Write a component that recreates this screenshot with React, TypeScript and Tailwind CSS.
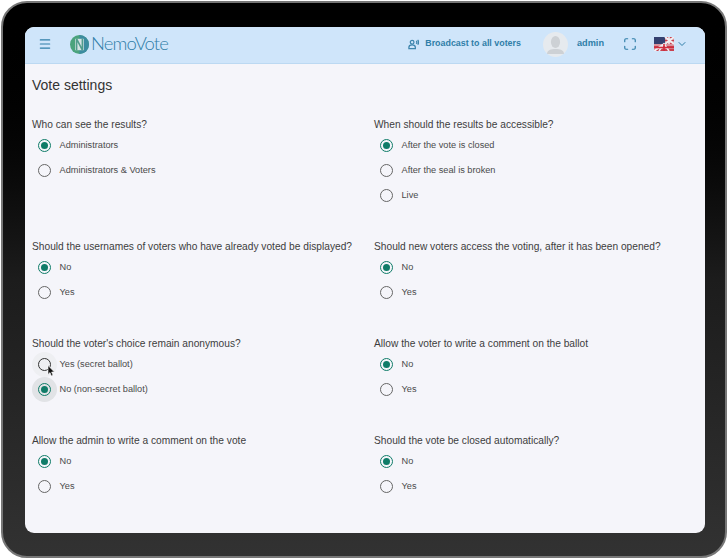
import { ChevronDown, Maximize, Menu } from "lucide-react";

// listed row by row, left cell then right cell
const QUESTIONS = [
  { q: "Who can see the results?", opts: ["Administrators", "Administrators & Voters"], on: 0 },
  { q: "When should the results be accessible?", opts: ["After the vote is closed", "After the seal is broken", "Live"], on: 0 },
  { q: "Should the usernames of voters who have already voted be displayed?", opts: ["No", "Yes"], on: 0 },
  { q: "Should new voters access the voting, after it has been opened?", opts: ["No", "Yes"], on: 0 },
  { q: "Should the voter's choice remain anonymous?", opts: ["Yes (secret ballot)", "No (non-secret ballot)"], on: 1, hover: true },
  { q: "Allow the voter to write a comment on the ballot", opts: ["No", "Yes"], on: 0 },
  { q: "Allow the admin to write a comment on the vote", opts: ["No", "Yes"], on: 0 },
  { q: "Should the vote be closed automatically?", opts: ["No", "Yes"], on: 0 },
];

function Radio({ label, checked, hover }: { label: string; checked: boolean; hover?: boolean }) {
  return (
    <div className="flex h-[25px] items-center">
      <span
        className={`flex h-[25px] w-[25px] items-center justify-center rounded-full ${
          hover ? (checked ? "bg-[#e1e3e6]" : "bg-[#eeeff2]") : ""
        }`}
      >
        <span
          className={`flex h-[13px] w-[13px] items-center justify-center rounded-full border-[1.5px] ${
            checked ? "border-[#0f7c68]" : hover ? "border-[#333333]" : "border-[#666666]"
          }`}
        >
          {checked && <span className="h-[7px] w-[7px] rounded-full bg-[#0f7c68]" />}
        </span>
      </span>
      <span className="ml-[2.5px] text-[9.2px] text-[#4a4a4a]">{label}</span>
    </div>
  );
}

function Question({ q, opts, on, hover }: { q: string; opts: string[]; on: number; hover?: boolean }) {
  return (
    <div className="mb-[31px]">
      <div className="h-4 text-[10.2px] leading-4 text-[#3d3d3d]">{q}</div>
      {opts.map((o, i) => (
        <div key={o} className="relative">
          <Radio label={o} checked={i === on} hover={hover} />
          {hover && i === 0 && (
            <svg className="absolute left-[15px] top-[13px] h-[12px] w-[9px]" viewBox="0 0 9 12">
              <path d="M1 0.5 L1 9.5 L3 7.6 L4.4 11 L6 10.3 L4.6 7 L7.4 7 Z" fill="#111111" stroke="#ffffff" strokeWidth="0.6" />
            </svg>
          )}
        </div>
      ))}
    </div>
  );
}

function Flag() {
  return (
    <svg className="h-[14px] w-5" viewBox="0 0 20 14">
      <rect width="20" height="14" fill="#c9404f" />
      <path d="M0 2h20M0 5h20M0 8h20M0 11h20" stroke="#e9e4ea" strokeWidth="1.2" />
      <rect width="11" height="7" fill="#34406f" />
      <path d="M11 0 20 7M20 0 11 7M0 14 10 7" stroke="#f1eef1" strokeWidth="2" />
      <path d="M15 0v7" stroke="#f1eef1" strokeWidth="1.6" />
      <path d="M5 14 10 7 15 14" stroke="#f1eef1" strokeWidth="1.6" fill="none" />
      <path d="M10 7v7M0 10.5h20" stroke="#d02b3c" strokeWidth="1.6" />
    </svg>
  );
}

export default function App() {
  return (
    <div className="h-[560px] w-[728px] bg-white p-px font-['Liberation_Sans',Arial,sans-serif]">
      <div className="h-[557px] w-[726px] rounded-[26px] border-2 border-[#777777] bg-gradient-to-b from-[#000000] via-[#1c1c1c] to-[#323232] pl-[22px] pt-6">
        <div className="flex h-[506px] w-[680px] flex-col overflow-hidden rounded-[9px] bg-[#f5f5fa]">
          <header className="flex h-[37px] shrink-0 items-center border-b border-[#bcd9f2] bg-[#cfe5fa] pb-[2px] text-[#2f7ea8]">
            <Menu className="ml-[13px] h-[14px] w-[14px]" strokeWidth={2} />
            <svg className="ml-[18px] h-[19px] w-[19px]" viewBox="0 0 20 20">
              <circle cx="10" cy="10" r="10" fill="#4aa37d" />
              <path d="M10 0a10 10 0 0 1 0 20z" fill="#3c8ca0" />
              <rect x="5.5" y="4" width="9" height="12" fill="#d4e3e4" />
              <path d="M7 16V4l6 12V4" fill="none" stroke="#4f9c8c" strokeWidth="1.6" />
            </svg>
            <span className="ml-[2px] font-['Lato',sans-serif] text-[18.5px] font-light tracking-[-0.9px] text-[#2f7ea8]">NemoVote</span>
            <svg className="ml-auto h-[11px] w-[11px]" viewBox="0 0 12 12" fill="none" stroke="#3f86ad" strokeWidth="1.4">
              <circle cx="4.5" cy="3.5" r="2" />
              <path d="M1 10.5V9c0-1.5 1.5-2.5 3.5-2.5S8 7.5 8 9v1.5z" />
              <path d="M9 2c.7.8.7 2.4 0 3.2M10.5 1c1.2 1.4 1.2 3.8 0 5.2" />
            </svg>
            <span className="ml-[6px] text-[8.9px] font-bold">Broadcast to all voters</span>
            <span className="relative ml-[22px] flex h-[25px] w-[25px] items-center justify-center overflow-hidden rounded-full bg-[#e6eaee]">
              <svg className="h-[25px] w-[25px]" viewBox="0 0 25 25" fill="#cdd1d5">
                <ellipse cx="12.5" cy="10" rx="4.6" ry="6" />
                <path d="M4 22c0-4 4-5 8.5-5S21 18 21 22z" />
              </svg>
            </span>
            <span className="ml-[9px] text-[9.2px] font-bold">admin</span>
            <Maximize className="ml-[19px] h-[14px] w-[14px]" strokeWidth={2} />
            <span className="ml-[17px] flex"><Flag /></span>
            <ChevronDown className="ml-[2px] mr-[17px] h-[12px] w-[12px]" strokeWidth={2} />
          </header>
          <main className="px-[7px] pt-[9px]">
            <h1 className="mb-[19px] h-6 text-[14px] leading-6 text-[#333333]">Vote settings</h1>
            <div className="grid grid-cols-[342px_1fr] pt-px">
              {QUESTIONS.map((item) => (
                <Question key={item.q} {...item} />
              ))}
            </div>
          </main>
        </div>
      </div>
    </div>
  );
}
